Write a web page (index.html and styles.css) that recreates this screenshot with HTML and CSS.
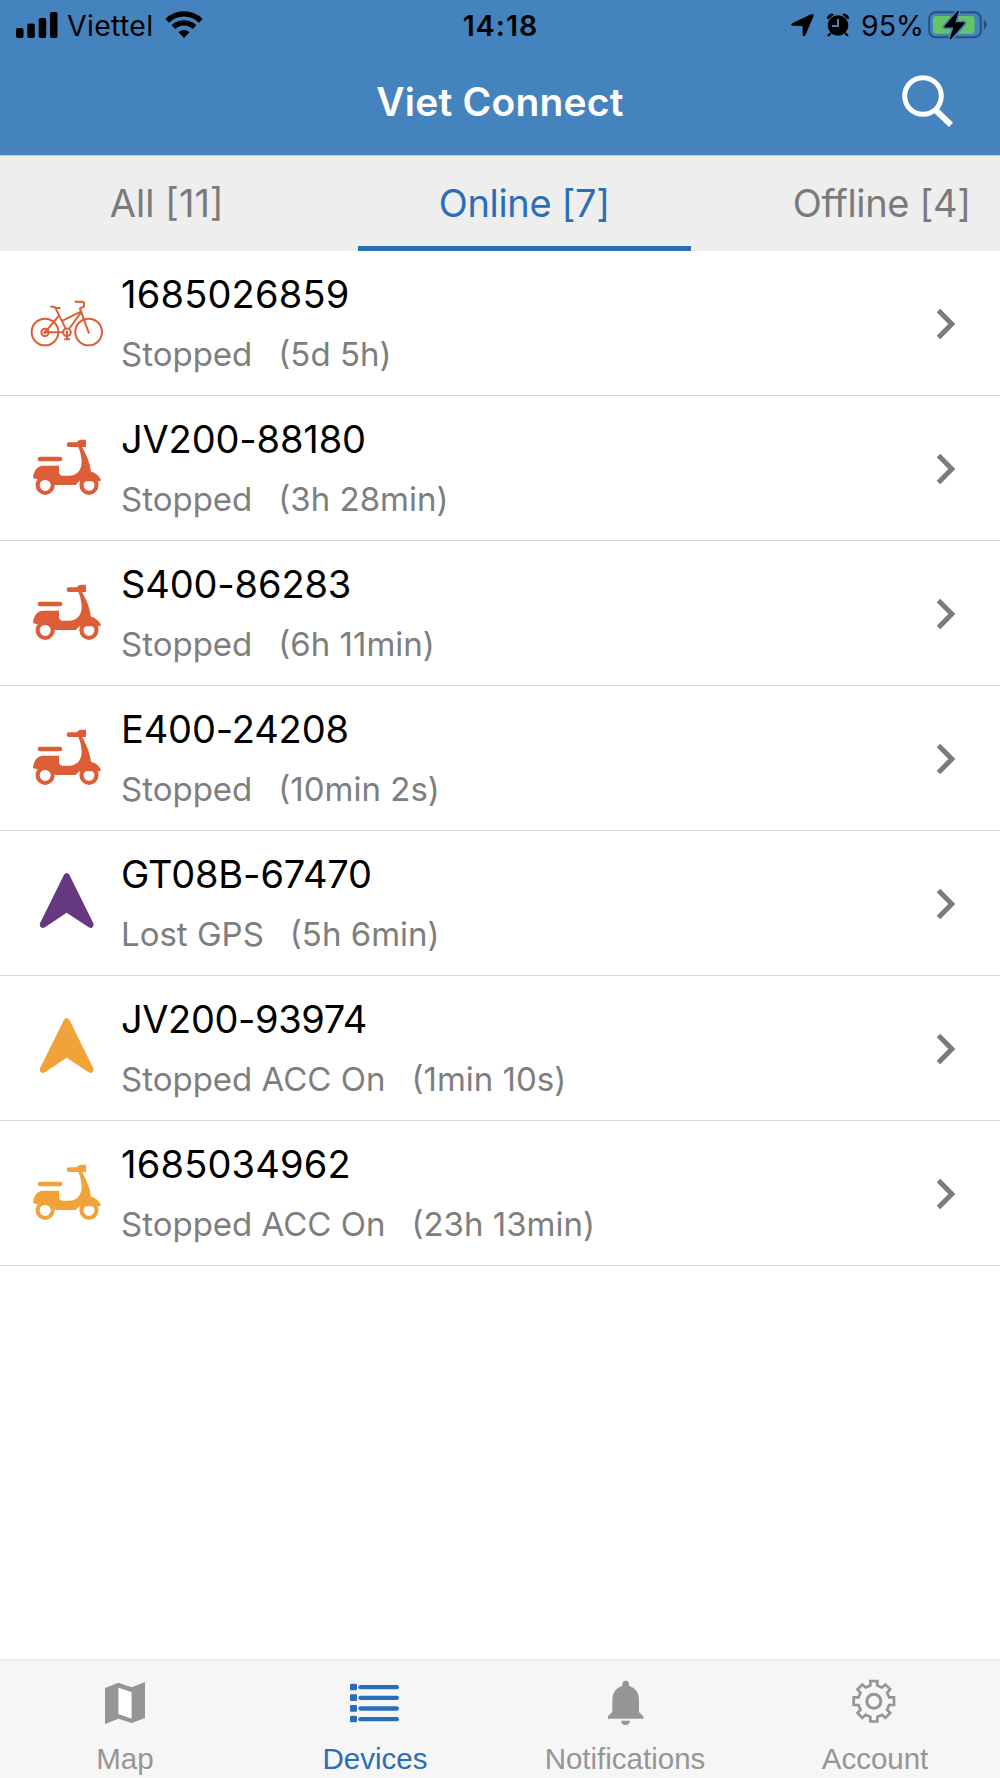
FILE: index.html
```html
<!DOCTYPE html>
<html lang="en">

<head>
    <meta charset="UTF-8">
    <meta name="viewport" content="width=device-width, initial-scale=1.0">
    <title>Viet Connect</title>
    <link rel="stylesheet" href="styles.css">
</head>

<body>
    <!-- shared icons -->
    <svg class="sprite" width="0" height="0">
        <symbol id="icon-bike" viewBox="21 9 240 180">
            <g fill="none" stroke="currentColor" stroke-width="6" stroke-linejoin="round">
                <circle cx="75" cy="126" r="40" />
                <circle cx="206" cy="126" r="40" />
                <circle cx="75" cy="127" r="11" />
                <circle cx="141" cy="127" r="11.5" />
                <path d="M91 50h9l8 4h13M107 55l31 63M75 127l42-50M75 127h56M128 92l56-28M147 117l37-51M207 130l-27-74 12-7V40q0-5-6-5h-22M141 122v25M133 148h17" />
            </g>
            <circle cx="75" cy="127" r="5" fill="currentColor" />
        </symbol>
        <symbol id="icon-scooter" viewBox="21 24 240 180">
            <g fill="currentColor">
                <rect x="53" y="80" width="74" height="14" rx="7" />
                <path d="M147 37h23q5-8 12-8h16v22h-12c12 20 24 48 27 74 14 3 24 12 30 25-2 4-6 4-10 4H178l-11 11h-62l-10-12-37-3-19-6c1-17 10-37 30-37h48v21q2 9 12 9h18c18 0 32-10 37-30 3-18-2-40-9-56h-28a7 7 0 0 1 0-14z" />
            </g>
            <g fill="none" stroke="currentColor" stroke-width="12.5">
                <circle cx="75.500" cy="166" r="22.500" />
                <circle cx="207" cy="166" r="22.500" />
            </g>
            <g class="hub">
                <circle cx="75.500" cy="166" r="16" />
                <path d="M191 159h32a16 16 0 1 1-32 0z" />
            </g>
        </symbol>
        <symbol id="icon-arrow" viewBox="22 39 240 180">
            <path d="M133 44q8-10 16 0l72 146q3 10-6 14-4 0-8-2l-66-44-65 44q-4 2-8 2-10-4-7-14z" fill="currentColor" />
        </symbol>
        <symbol id="icon-chevron" viewBox="0 0 20 32">
            <path d="M2.500 2.500 15.800 16 2.500 29.500" fill="none" stroke="currentColor" stroke-width="5" />
        </symbol>
    </svg>

    <header class="header">
        <div class="status-bar">
            <div class="status-left">
                <svg class="signal" width="42" height="26" viewBox="0 0 42 26">
                    <rect x="0" y="16" width="7.500" height="10" rx="2" />
                    <rect x="11.300" y="11.500" width="7.500" height="14.500" rx="2" />
                    <rect x="22.700" y="6" width="7.500" height="20" rx="2" />
                    <rect x="34" y="0" width="7.500" height="26" rx="2" />
                </svg>
                <span class="carrier">Viettel</span>
                <svg class="wifi" width="38" height="27" viewBox="0 0 38 27">
                    <g fill="none" stroke="#000" stroke-width="5.200">
                        <path d="M2.200 9.800a24 24 0 0 1 33.600 0" />
                        <path d="M8.400 16.200a15.200 15.200 0 0 1 21.200 0" />
                    </g>
                    <path d="M19 27l-5.500-5.700a8 8 0 0 1 11 0z" />
                </svg>
            </div>
            <div class="clock">14:18</div>
            <div class="status-right">
                <svg class="location" width="23" height="23" viewBox="0 0 23 23">
                    <path d="M1 9.800 20.500.400q2-.6 1.800 1.300L14 21.300q-1.300 1.500-2-.3V11.600L1.300 11.300q-1.600-.6-.3-1.500z" stroke="#000" stroke-width=".8" />
                </svg>
                <svg class="alarm" width="24" height="24" viewBox="0 0 24 24">
                    <circle cx="12" cy="12.500" r="10.300" />
                    <path d="M.800 5Q2 1 6 .500L8 1.500 2 6.500zM23.200 5Q22 1 18 .500L16 1.500l6 5z" />
                    <path d="M5 20l-3 3M19 20l3 3" stroke="#000" stroke-width="2" />
                    <path class="hands" d="M12 6v7H6" />
                </svg>
                <span class="percent">95%</span>
                <svg class="battery" width="60" height="30" viewBox="0 0 60 30">
                    <rect x="1.200" y="2.200" width="51.600" height="25" rx="6.500" fill="none" stroke="#2b5075" stroke-width="2" />
                    <path d="M55.800 10v9.500q3-1.500 3.200-4.700-.2-3.300-3.200-4.800z" fill="#2b5075" />
                    <rect x="5" y="6" width="41.500" height="17.700" rx="3" fill="#65c466" />
                    <path d="M30 1.500 17 16.800h9.500L22.500 28.500 36 13h-9.600z" stroke="#4583bf" stroke-width="5" stroke-linejoin="round" />
                    <path d="M30 1.500 17 16.800h9.500L22.500 28.500 36 13h-9.600z" stroke="#000" stroke-width="1.500" stroke-linejoin="round" />
                </svg>
            </div>
        </div>
        <div class="title-bar">
            <h1 class="title">Viet Connect</h1>
            <button class="search-btn" aria-label="Search">
                <svg width="54" height="54" viewBox="0 0 54 54" fill="none" stroke="#fff">
                    <circle cx="22" cy="22" r="18.300" stroke-width="5" />
                    <path d="M34 35.500 50 50.800" stroke-width="6" />
                </svg>
            </button>
        </div>
    </header>

    <nav class="tabs">
        <a class="tab">All [11]</a>
        <a class="tab active">Online [7]</a>
        <a class="tab">Offline [4]</a>
    </nav>

    <main class="device-list">
        <div class="device stopped">
            <svg class="device-icon"><use href="#icon-bike" /></svg>
            <div class="device-info">
                <div class="device-name numeric">1685026859</div>
                <div class="device-status"><span>Stopped</span><span>(5d 5h)</span></div>
            </div>
            <svg class="chevron"><use href="#icon-chevron" /></svg>
        </div>
        <div class="device stopped">
            <svg class="device-icon"><use href="#icon-scooter" /></svg>
            <div class="device-info">
                <div class="device-name">JV200-88180</div>
                <div class="device-status"><span>Stopped</span><span>(3h 28min)</span></div>
            </div>
            <svg class="chevron"><use href="#icon-chevron" /></svg>
        </div>
        <div class="device stopped">
            <svg class="device-icon"><use href="#icon-scooter" /></svg>
            <div class="device-info">
                <div class="device-name">S400-86283</div>
                <div class="device-status"><span>Stopped</span><span>(6h 11min)</span></div>
            </div>
            <svg class="chevron"><use href="#icon-chevron" /></svg>
        </div>
        <div class="device stopped">
            <svg class="device-icon"><use href="#icon-scooter" /></svg>
            <div class="device-info">
                <div class="device-name">E400-24208</div>
                <div class="device-status"><span>Stopped</span><span>(10min 2s)</span></div>
            </div>
            <svg class="chevron"><use href="#icon-chevron" /></svg>
        </div>
        <div class="device lost">
            <svg class="device-icon"><use href="#icon-arrow" /></svg>
            <div class="device-info">
                <div class="device-name">GT08B-67470</div>
                <div class="device-status"><span>Lost GPS</span><span>(5h 6min)</span></div>
            </div>
            <svg class="chevron"><use href="#icon-chevron" /></svg>
        </div>
        <div class="device acc-on">
            <svg class="device-icon"><use href="#icon-arrow" /></svg>
            <div class="device-info">
                <div class="device-name tight">JV200-93974</div>
                <div class="device-status"><span>Stopped ACC On</span><span>(1min 10s)</span></div>
            </div>
            <svg class="chevron"><use href="#icon-chevron" /></svg>
        </div>
        <div class="device acc-on">
            <svg class="device-icon"><use href="#icon-scooter" /></svg>
            <div class="device-info">
                <div class="device-name numeric">1685034962</div>
                <div class="device-status"><span>Stopped ACC On</span><span>(23h 13min)</span></div>
            </div>
            <svg class="chevron"><use href="#icon-chevron" /></svg>
        </div>
    </main>

    <footer class="bottom-nav">
        <a class="nav-item">
            <svg viewBox="120 81 150 150">
                <path fill-rule="evenodd" d="M135 114l40-16 40 14 40-16v108l-40 15-40-13-40 16zM175 113v79l40 14v-79z" fill="currentColor" />
                <path d="M177 115l36 12v77l-36-12z" fill="#fff" />
            </svg>
            <span>Map</span>
        </a>
        <a class="nav-item active">
            <svg viewBox="870 81 150 150">
                <g fill="currentColor">
                    <rect x="870" y="101" width="21" height="20" rx="3" />
                    <rect x="870" y="133" width="21" height="20" rx="3" />
                    <rect x="870" y="165" width="21" height="20" rx="3" />
                    <rect x="870" y="197" width="21" height="20" rx="3" />
                    <rect x="895" y="105" width="122" height="13" rx="6.500" />
                    <rect x="895" y="137" width="122" height="13" rx="6.500" />
                    <rect x="895" y="169" width="122" height="13" rx="6.500" />
                    <rect x="895" y="201" width="122" height="13" rx="6.500" />
                </g>
            </svg>
            <span>Devices</span>
        </a>
        <a class="nav-item">
            <svg viewBox="240 81 150 150" fill="currentColor">
                <path d="M307 107v-5a10 10 0 0 1 20 0v5q30 10 30 42v37l13 13v7H264v-7l13-13v-37q0-32 30-42zM303 212h27q-2 13-13.500 13T303 212z" />
            </svg>
            <span>Notifications</span>
        </a>
        <a class="nav-item">
            <svg viewBox="989 81 150 150" fill="none" stroke="currentColor" stroke-width="8">
                <circle cx="1060.500" cy="154" r="21" stroke-width="9" />
                <path d="M1050 93.500h21v13l14 6 10-9 14.500 14.500-9 10 6 14h14.500v23h-14.500l-6 14 9 10-14.500 14.500-10-9-14 6v14h-21v-14l-14-6-10 9-14.500-14.500 9-10-6-14h-14.500v-23h14.500l6-14-9-10 14.500-14.500 10 9 14-6z" />
            </svg>
            <span>Account</span>
        </a>
    </footer>
</body>

</html>
```
FILE: styles.css
```css
* {
    box-sizing: border-box;
}

body {
    margin: 0;
    height: 1778px;
    display: flex;
    flex-direction: column;
    overflow: hidden;
    background: #fff;
    color: #000;
    font-family: Inter, 'Liberation Sans', sans-serif;
}

.sprite {
    position: absolute;
}

/* header */
.header {
    height: 156px;
    background: #4583bf;
    border-bottom: 1px solid #c3c9cf;
}

.status-bar {
    height: 50px;
    padding: 0 12px 0 16px;
    display: grid;
    grid-template-columns: 1fr auto 1fr;
    font-size: 28.5px;
    line-height: 51px;
}

.status-left,
.status-right {
    display: flex;
    align-items: center;
}

.status-right {
    justify-content: flex-end;
}

.signal {
    margin: 0 9px 2px 0;
}

.carrier {
    width: 87px;
    letter-spacing: 0.3px;
}

.wifi {
    margin: 0 0 3px 11px;
}

.clock {
    margin-right: 3px;
    font-weight: 600;
    letter-spacing: 1px;
}

.alarm {
    margin-left: 12px;
    margin-bottom: 1px;
}

.hands {
    fill: none;
    stroke: #4583bf;
    stroke-width: 2;
}

.percent {
    margin-left: 11px;
    width: 61px;
}

.battery {
    margin: 0 0 2px 6px;
}

.title-bar {
    height: 102px;
    padding: 0 45px 0 99px;
    display: flex;
    align-items: center;
}

.title {
    flex: 1;
    margin: 0;
    color: #fff;
    font-size: 39px;
    font-weight: 600;
    letter-spacing: 0.2px;
    text-align: center;
}

.search-btn {
    width: 54px;
    height: 54px;
    padding: 0;
    background: none;
    border: none;
}

/* tabs */
.tabs {
    height: 95px;
    display: flex;
    gap: 24px;
    overflow: hidden;
    background: #eee;
}

.tab {
    flex: 0 0 333.5px;
    padding-top: 2px;
    border-bottom: 5px solid transparent;
    color: #7a7a7a;
    font-size: 38px;
    letter-spacing: -0.35px;
    line-height: 90px;
    text-align: center;
}

.tab:first-child {
    letter-spacing: 0;
}

.tab.active {
    color: #2a6db8;
    border-color: #2a6db8;
}

/* device list */
.device-list {
    flex: 1;
}

.device {
    height: 145px;
    padding: 0 44px 0 27px;
    display: flex;
    align-items: center;
    border-bottom: 1px solid #d8d8d8;
}

.device-icon {
    width: 80px;
    height: 60px;
}

.stopped .device-icon {
    color: #dc5d36;
}

.lost .device-icon {
    color: #65387f;
}

.acc-on .device-icon {
    color: #f1a33a;
}

.hub {
    fill: #fff;
}

.device-info {
    flex: 1;
    margin-left: 14px;
    padding-top: 2px;
}

.device-name {
    font-size: 38px;
    line-height: 60px;
    letter-spacing: -0.15px;
}

.device-name.numeric {
    letter-spacing: 0.2px;
}

.device-name.tight {
    letter-spacing: -0.4px;
}

.device-status {
    display: flex;
    gap: 26px;
    color: #7e7e7e;
    font-size: 33px;
    line-height: 60px;
}

.chevron {
    width: 20px;
    height: 32px;
    margin-top: 2px;
    color: #7b7b7b;
}

/* bottom navigation */
.bottom-nav {
    height: 119px;
    display: flex;
    background: #f6f6f6;
    border-top: 2px solid #eee;
}

.nav-item {
    flex: 1;
    padding-top: 16px;
    display: flex;
    flex-direction: column;
    align-items: center;
    gap: 15px;
    color: #959595;
    font-family: 'Liberation Sans', Arial, sans-serif;
    font-size: 29.5px;
}

.nav-item svg {
    flex: none;
    width: 50px;
    height: 50px;
}

.nav-item.active {
    color: #2a6db8;
}
```
